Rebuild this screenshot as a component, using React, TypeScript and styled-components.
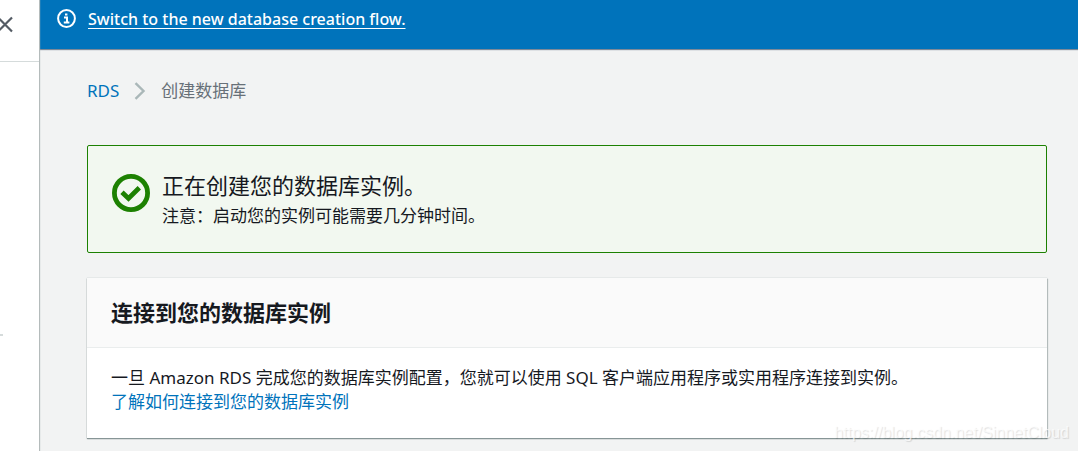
import React from "react";
import styled, { createGlobalStyle } from "styled-components";

const GlobalStyle = createGlobalStyle`
  * { box-sizing: border-box; }
  body {
    margin: 0;
    background: #f2f3f3;
    color: #16191f;
    font-family: "Noto Sans", "Noto Sans CJK SC", sans-serif;
    font-size: 17px;
    line-height: 24px;
  }
`;

const Page = styled.div`
  position: relative;
  display: flex;
  min-height: 100vh;
  overflow: hidden;
`;

const Sidebar = styled.aside`
  position: relative;
  z-index: 1;
  flex: 0 0 39px;
  min-width: 0;
  background: #fff;
  box-shadow: 1px 0 1px #b4bbbb;
`;

const SidebarHeader = styled.div`
  display: flex;
  justify-content: flex-end;
  height: 62px;
  padding: 16px 26px 0 0;
  border-bottom: 1px solid #d5dbdb;
`;

const SidebarRule = styled.hr`
  width: 3px;
  height: 2px;
  margin: 272px 0 0;
  border: 0;
  background: #d5dbdb;
`;

const CloseButton = styled.button`
  flex: none;
  display: flex;
  width: 16px;
  height: 17px;
  padding: 0;
  border: 0;
  background: none;
`;

const Main = styled.main`
  flex: 1;
  min-width: 0;
`;

const Banner = styled.div`
  display: flex;
  align-items: flex-start;
  gap: 12px;
  padding: 8px 18px 18px;
  background: #0073bb;
  color: #fff;
  font-size: 16px;
  font-weight: 500;
  line-height: 23px;
  box-shadow: 0 1px 1px #7d8998;

  svg { flex: none; margin-top: 1px; }
`;

const BannerLink = styled.a`
  color: #fff;
  text-decoration: underline;
  text-decoration-thickness: 1px;
  text-underline-offset: 3px;
`;

const Content = styled.div`
  padding: 30px 31px 13px 48px;
`;

const Breadcrumbs = styled.nav`
  display: flex;
  align-items: center;
  gap: 15px;
  margin-bottom: 42px;
  color: #687078;
`;

const TextLink = styled.a`
  color: #0073bb;
  text-decoration: none;
`;

const Alert = styled.section`
  display: flex;
  gap: 12px;
  padding: 23px 24px 21px;
  border: 1px solid #1d8102;
  border-radius: 2px;
  background: #f2f8f0;

  svg { flex: none; margin-top: 5px; }
`;

const AlertTitle = styled.div`
  font-size: 22px;
  line-height: 32px;
`;

const AlertText = styled.div`
  line-height: 30px;
`;

const Card = styled.section`
  margin-top: 25px;
  background: #fff;
  box-shadow: 0 1px 1px #879596, 1px 1px 1px #bcc3c3, 0 0 1px #aab7b8;
`;

const CardHeader = styled.header`
  padding: 19px 24px;
  border-bottom: 1px solid #eaeded;
  background: #fafafa;
`;

const CardTitle = styled.h2`
  margin: 0;
  font-size: 22px;
  line-height: 31px;
`;

const CardBody = styled.div`
  padding: 18px 24px 24px;

  p { margin: 0; }
`;

const Watermark = styled.div`
  position: absolute;
  right: 9px;
  bottom: 6px;
  color: rgba(255, 255, 255, 0.7);
  font: 16px/24px "Liberation Sans", sans-serif;
  text-shadow: 1px 1px 1px rgba(0, 0, 0, 0.12);
`;

export default function App() {
  return (
    <Page>
      <GlobalStyle />
      <Sidebar>
        <SidebarHeader>
          <CloseButton type="button" aria-label="Close">
            <svg width="16" height="17" viewBox="0 0 16 17" fill="none" stroke="#545b64" strokeWidth="2.2">
              <path d="M1 1.5 15 15.5M15 1.5 1 15.5" />
            </svg>
          </CloseButton>
        </SidebarHeader>
        <SidebarRule />
      </Sidebar>
      <Main>
        <Banner>
          <svg width="19" height="19" viewBox="0 0 19 19" fill="none" stroke="#fff" strokeWidth="2">
            <circle cx="9.5" cy="9.5" r="8.4" />
            <path d="M7 8.4h3v5M6.8 13.4h5.6M8 5.4h2.4" />
          </svg>
          <BannerLink href="#">Switch to the new database creation flow.</BannerLink>
        </Banner>
        <Content>
          <Breadcrumbs aria-label="Breadcrumb">
            <TextLink href="#">RDS</TextLink>
            <svg width="12" height="18" viewBox="0 0 12 18" fill="none" stroke="#aab7b8" strokeWidth="2.4">
              <path d="M1.5 1.2 9.5 9 1.5 16.8" />
            </svg>
            <span>创建数据库</span>
          </Breadcrumbs>
          <Alert role="status">
            <svg width="38" height="38" viewBox="0 0 38 38" fill="none" stroke="#1d8102" strokeWidth="4.8">
              <circle cx="19" cy="19" r="16.6" />
              <path d="M10 18.2 16.5 24.4 27.3 13.8" />
            </svg>
            <div>
              <AlertTitle>正在创建您的数据库实例。</AlertTitle>
              <AlertText>注意：启动您的实例可能需要几分钟时间。</AlertText>
            </div>
          </Alert>
          <Card>
            <CardHeader>
              <CardTitle>连接到您的数据库实例</CardTitle>
            </CardHeader>
            <CardBody>
              <p>一旦 Amazon RDS 完成您的数据库实例配置，您就可以使用 SQL 客户端应用程序或实用程序连接到实例。</p>
              <TextLink href="#">了解如何连接到您的数据库实例</TextLink>
            </CardBody>
          </Card>
        </Content>
      </Main>
      <Watermark>https://blog.csdn.net/SinnetCloud</Watermark>
    </Page>
  );
}
